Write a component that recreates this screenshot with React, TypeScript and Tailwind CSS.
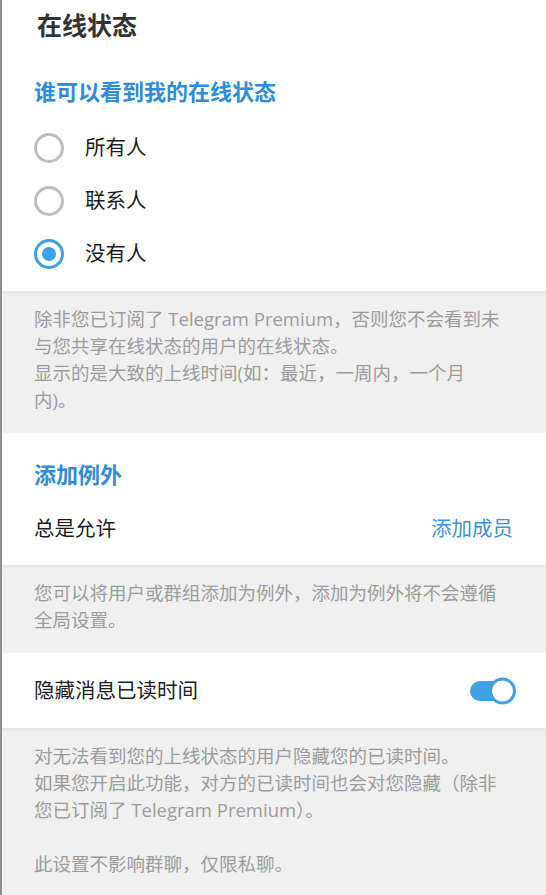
import React, { useState } from "react";

const font = {
  fontFamily: '"Open Sans", "Noto Sans CJK SC", sans-serif',
};

type RadioProps = {
  label: string;
  checked: boolean;
  onSelect: () => void;
};

function RadioRow({ label, checked, onSelect }: RadioProps) {
  return (
    <button
      type="button"
      onClick={onSelect}
      className="flex h-[53px] w-full items-center gap-[21px] text-left"
    >
      {checked ? (
        <span className="flex size-[30px] items-center justify-center rounded-full border-[3px] border-[#3ea1e3]">
          <span className="size-[14px] rounded-full bg-[#3ea1e3]" />
        </span>
      ) : (
        <span className="size-[30px] rounded-full border-[3px] border-[#bdbdbd]" />
      )}
      <span className="text-[20.5px] leading-none text-[#1c1c1c]">{label}</span>
    </button>
  );
}

function Note({ children }: { children: React.ReactNode }) {
  return (
    <div className="bg-[#f0f0f0] px-[32px] pb-[20px] pt-[14px] text-[18.5px] leading-[27px] text-[#9b9b9b] shadow-[inset_0_5px_4px_-4px_rgba(0,0,0,0.08)]">
      {children}
    </div>
  );
}

export default function App() {
  const [visibility, setVisibility] = useState("nobody");
  const [hideRead, setHideRead] = useState(true);

  const options = [
    { id: "everyone", label: "所有人" },
    { id: "contacts", label: "联系人" },
    { id: "nobody", label: "没有人" },
  ];

  return (
    <div
      style={font}
      className="min-h-[895px] w-[546px] border-l-2 border-[#8e8e8e] bg-white pb-[2px]"
    >
      <div className="bg-white px-[32px] pb-[11px]">
        <h1 className="flex h-[52px] items-center pl-[3px] text-[25px] font-bold text-[#333333]">
          在线状态
        </h1>
        <h2 className="flex h-[69px] items-center pt-[10px] text-[22px] font-bold text-[#2f8cd6]">
          谁可以看到我的在线状态
        </h2>
        {options.map((o) => (
          <RadioRow
            key={o.id}
            label={o.label}
            checked={visibility === o.id}
            onSelect={() => setVisibility(o.id)}
          />
        ))}
      </div>

      <Note>
        除非您已订阅了 Telegram Premium，否则您不会看到未与您共享在线状态的用户的在线状态。
        <br />
        显示的是大致的上线时间(如：最近，一周内，一个月
        <br />
        内)。
      </Note>

      <div className="bg-white px-[32px]">
        <h2 className="flex h-[76px] items-center pt-[6px] text-[22px] font-bold text-[#2f8cd6]">
          添加例外
        </h2>
        <div className="flex h-[56px] items-center justify-between pb-[18px]">
          <span className="text-[20.5px] text-[#1c1c1c]">总是允许</span>
          <button type="button" className="mr-[1px] text-[20.5px] text-[#3a92dc]">
            添加成员
          </button>
        </div>
      </div>

      <Note>
        您可以将用户或群组添加为例外，添加为例外将不会遵循全局设置。
      </Note>

      <div className="flex h-[75px] items-center justify-between bg-white px-[32px]">
        <span className="text-[20.5px] text-[#1c1c1c]">隐藏消息已读时间</span>
        <button
          type="button"
          onClick={() => setHideRead(!hideRead)}
          className={`relative mr-[-1px] h-[20px] w-[45px] rounded-full ${
            hideRead ? "bg-[#3ea1e3]" : "bg-[#cfcfcf]"
          }`}
        >
          <span
            className={`absolute top-1/2 size-[27px] -translate-y-1/2 rounded-full border-[3px] bg-white ${
              hideRead ? "right-[-1px] border-[#3ea1e3]" : "left-[-1px] border-[#cfcfcf]"
            }`}
          />
        </button>
      </div>

      <Note>
        对无法看到您的上线状态的用户隐藏您的已读时间。
        <br />
        如果您开启此功能，对方的已读时间也会对您隐藏（除非您已订阅了 Telegram Premium）。
        <br />
        <br />
        此设置不影响群聊，仅限私聊。
      </Note>
    </div>
  );
}
